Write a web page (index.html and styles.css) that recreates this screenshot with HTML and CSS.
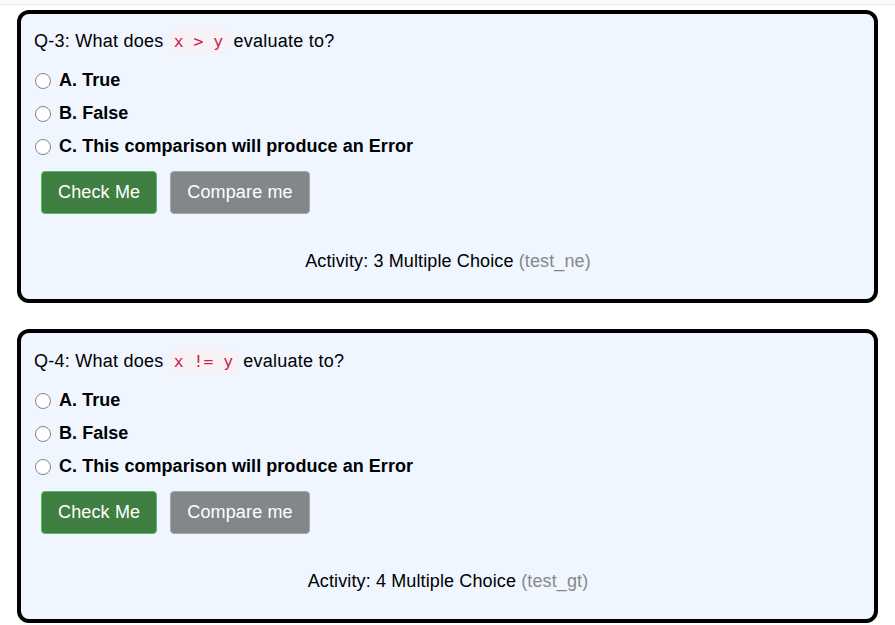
FILE: index.html
```html
<!DOCTYPE html>
<html>
<head>
<meta charset="utf-8">
<link rel="stylesheet" href="styles.css">
</head>
<body>
<div class="topbar"></div>
<main class="page">
  <section class="card">
    <p class="question">Q-3: What does <code>x &gt; y</code> evaluate to?</p>
    <ul class="options">
      <li class="option"><span class="radio"></span><span class="label">A. True</span></li>
      <li class="option"><span class="radio"></span><span class="label">B. False</span></li>
      <li class="option"><span class="radio"></span><span class="label">C. This comparison will produce an Error</span></li>
    </ul>
    <div class="actions">
      <button class="btn btn-success">Check Me</button>
      <button class="btn btn-gray">Compare me</button>
    </div>
    <p class="activity">Activity: 3 Multiple Choice <span class="id">(test_ne)</span></p>
  </section>
  <section class="card card-second">
    <p class="question">Q-4: What does <code>x != y</code> evaluate to?</p>
    <ul class="options">
      <li class="option"><span class="radio"></span><span class="label">A. True</span></li>
      <li class="option"><span class="radio"></span><span class="label">B. False</span></li>
      <li class="option"><span class="radio"></span><span class="label">C. This comparison will produce an Error</span></li>
    </ul>
    <div class="actions">
      <button class="btn btn-success">Check Me</button>
      <button class="btn btn-gray">Compare me</button>
    </div>
    <p class="activity">Activity: 4 Multiple Choice <span class="id">(test_gt)</span></p>
  </section>
</main>
</body>
</html>
```
FILE: styles.css
```css
* { box-sizing: border-box; }
html, body {
  margin: 0;
  padding: 0;
  background: #ffffff;
  font-family: "Liberation Sans", Arial, Helvetica, sans-serif;
  font-size: 18px;
  color: #111;
}
.topbar {
  height: 5px;
  background: #fbfbfb;
  border-bottom: 1px solid #e6e6e6;
}
.page {
  padding: 5px 17px 0 17px;
  display: flex;
  flex-direction: column;
  gap: 26px;
}
.card {
  background: #eff6ff;
  border: 4px solid #000;
  border-radius: 12px;
  padding: 14px 12px 24px 13px;
  height: 293px;
}
.card-second {
  padding-top: 15px;
  height: 294px;
}
.question {
  margin: 0 0 9px 0;
  line-height: 26px;
  letter-spacing: 0.25px;
  color: #000;
}
code {
  font-family: "DejaVu Sans Mono", "Liberation Mono", monospace;
  font-size: 16.4px;
  letter-spacing: 0;
  color: #c7254e;
  background: #f9f2f4;
  padding: 2px 5px;
  border-radius: 4px;
}
.options {
  list-style: none;
  margin: 0;
  padding: 0;
}
.option {
  display: flex;
  align-items: center;
  height: 33px;
}
.radio {
  width: 16px;
  height: 16px;
  border-radius: 50%;
  border: 1.5px solid #85858a;
  background: #fff;
  margin-left: 1px;
  margin-right: 8px;
  flex: none;
}
.label {
  font-weight: bold;
  color: #000;
  letter-spacing: 0.05px;
}
.actions {
  display: flex;
  gap: 13px;
  margin: 8px 0 0 7px;
}
.btn {
  font-family: "Liberation Sans", Arial, Helvetica, sans-serif;
  font-size: 18px;
  line-height: 23px;
  padding: 9px 16px;
  border-radius: 4px;
  color: #fff;
  cursor: pointer;
  letter-spacing: 0.15px;
}
.btn-success {
  background: #3f7f42;
  border: 1px solid #5cb85c;
}
.btn-gray {
  background: #84878a;
  border: 1px solid #a8a8a8;
}
.activity {
  margin: 34px 0 0 0;
  line-height: 26px;
  text-align: center;
  color: #000;
  letter-spacing: 0.12px;
}
.id {
  color: #888;
}
```
